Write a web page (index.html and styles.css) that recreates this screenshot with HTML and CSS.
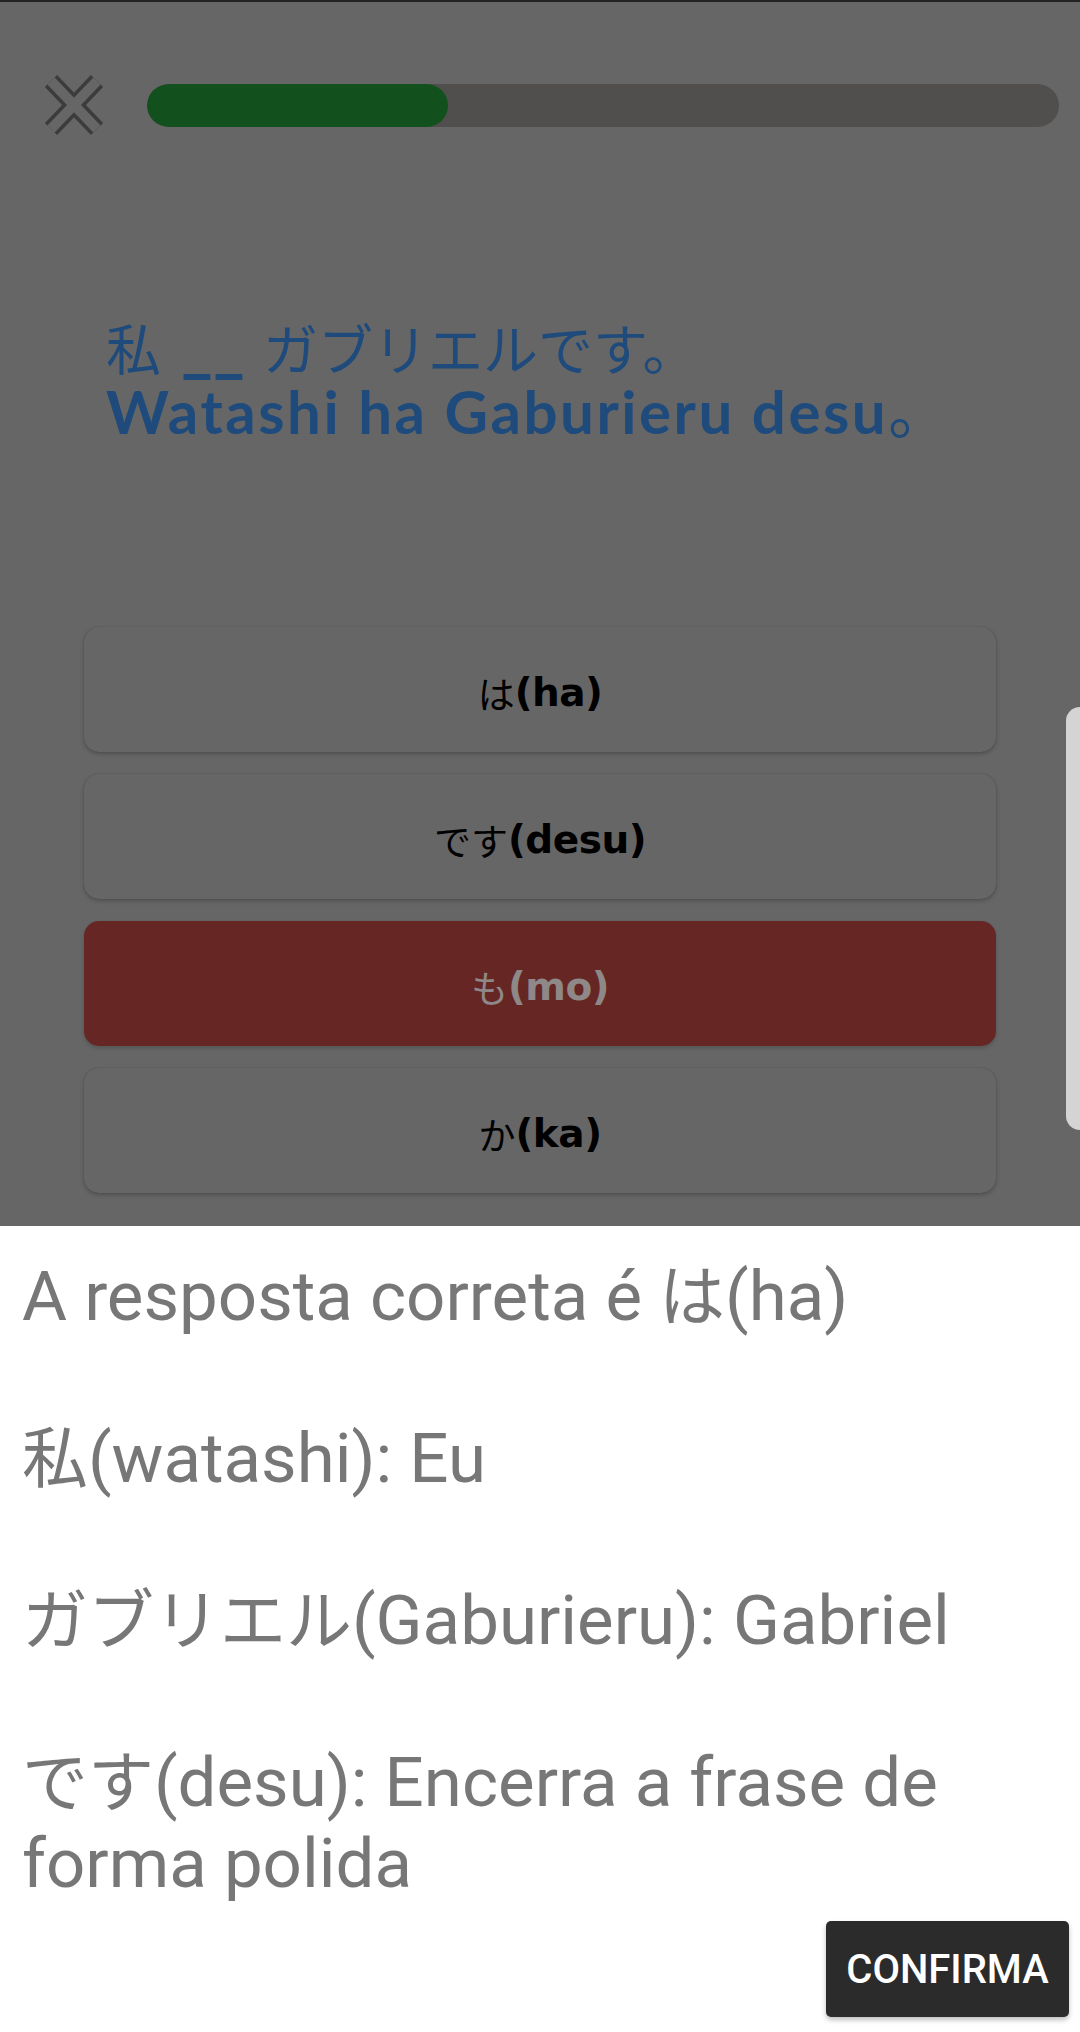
FILE: index.html
```html
<!DOCTYPE html>
<html lang="pt">
<head>
<meta charset="utf-8">
<link rel="stylesheet" href="styles.css">
</head>
<body>
<div class="screen">
  <div class="lesson">
    <div class="header">
      <svg class="close" viewBox="0 0 64 66" width="64" height="66">
        <g fill="none" stroke-linecap="butt">
          <path d="M9 9 L55 57 M55 9 L9 57" stroke="#3c3c3c" stroke-width="17"/>
          <path d="M9 9 L55 57 M55 9 L9 57" stroke="#666666" stroke-width="10"/>
        </g>
      </svg>
      <div class="progress"><div class="progress-fill" style="width:33%"></div></div>
    </div>
    <div class="question">
      <div class="q-jp">私<span class="blank">__</span>ガブリエルです。</div>
      <div class="q-romaji">Watashi ha Gaburieru desu<span class="jp-stop">。</span></div>
    </div>
    <div class="options">
      <div class="option"><span class="jp">は</span><span class="rom">(ha)</span></div>
      <div class="option"><span class="jp">です</span><span class="rom">(desu)</span></div>
      <div class="option wrong"><span class="jp">も</span><span class="rom">(mo)</span></div>
      <div class="option"><span class="jp">か</span><span class="rom">(ka)</span></div>
    </div>
    <div class="edge-handle"></div>
  </div>
  <div class="sheet">
    <p class="explain">A resposta correta é <span class="jp">は</span>(ha)<br><br><span class="jp">私</span>(watashi): Eu<br><br><span class="jp">ガブリエル</span>(Gaburieru): Gabriel<br><br><span class="jp">です</span>(desu): Encerra a frase de forma polida</p>
    <button class="confirm">CONFIRMA</button>
  </div>
</div>
</body>
</html>
```

FILE: styles.css
```css
html, body {
  margin: 0;
  padding: 0;
}
body {
  width: 1080px;
  height: 2032px;
  overflow: hidden;
  background: #666666;
  font-family: "Roboto", "Noto Sans CJK JP", sans-serif;
}
.screen {
  display: flex;
  flex-direction: column;
  height: 2032px;
}
.lesson {
  position: relative;
  height: 1226px;
  flex: none;
  background: #666666;
  border-top: 2px solid #222222;
  box-sizing: border-box;
}
.header {
  display: flex;
  align-items: center;
  gap: 41px;
  padding: 70px 21px 0 42px;
}
.close {
  display: block;
  flex: none;
}
.progress {
  flex: 1;
  height: 43px;
  border-radius: 22px;
  background: #504f4d;
  overflow: hidden;
}
.progress-fill {
  height: 100%;
  background: #12501e;
  border-radius: 22px;
}
.question {
  margin: 172px 0 0 106px;
  color: #1e4b7c;
}
.q-jp {
  font-family: "Noto Sans CJK JP", sans-serif;
  font-size: 55px;
  line-height: 62px;
  font-weight: 400;
}
.blank {
  font-family: "Lato", sans-serif;
  font-weight: 900;
  font-size: 68px;
  line-height: 1;
  margin: 0 18px 0 20px;
}
.q-romaji {
  font-family: "Lato", "Noto Sans CJK JP", sans-serif;
  font-weight: 700;
  font-size: 60px;
  letter-spacing: 2.5px;
  line-height: 62px;
}
.jp-stop {
  font-family: "Noto Sans CJK JP", sans-serif;
  font-weight: 400;
  line-height: 1;
}
.options {
  display: flex;
  flex-direction: column;
  gap: 22px;
  margin: 185px 0 0 84px;
  width: 912px;
}
.option {
  height: 125px;
  border-radius: 15px;
  background: #666666;
  box-shadow: 0 2px 4px rgba(0, 0, 0, 0.22), 0 0 1px rgba(0, 0, 0, 0.25);
  display: flex;
  align-items: center;
  justify-content: center;
  color: #000000;
  font-size: 37px;
  padding-top: 6px;
  box-sizing: border-box;
}
.option .jp {
  font-family: "Noto Sans CJK JP", sans-serif;
  font-weight: 400;
}
.option .rom {
  font-family: "DejaVu Sans", sans-serif;
  font-weight: 700;
  font-size: 39px;
  letter-spacing: -0.5px;
}
.option.wrong {
  background: #662624;
  color: #8e8888;
  box-shadow: 0 2px 4px rgba(0, 0, 0, 0.18);
}
.edge-handle {
  position: absolute;
  right: 0;
  top: 705px;
  width: 14px;
  height: 423px;
  background: #d4d4d4;
  border-radius: 14px 0 0 14px;
}
.sheet {
  flex: 1;
  background: #ffffff;
  display: flex;
  flex-direction: column;
}
.explain {
  margin: 0;
  padding: 30px 60px 0 22px;
  font-family: "Roboto", "Noto Sans CJK JP", sans-serif;
  font-size: 69px;
  line-height: 81px;
  color: #777777;
}
.explain .jp {
  font-family: "Noto Sans CJK JP", sans-serif;
  font-size: 66px;
  line-height: 1;
}
.confirm {
  margin: auto 11px 15px auto;
  width: 243px;
  height: 96px;
  border: none;
  border-radius: 5px;
  background: #2b2b2b;
  color: #ffffff;
  font-family: "Roboto", sans-serif;
  font-weight: 500;
  font-size: 40px;
  padding: 0;
  box-shadow: 0 3px 5px rgba(0, 0, 0, 0.25);
}
```
